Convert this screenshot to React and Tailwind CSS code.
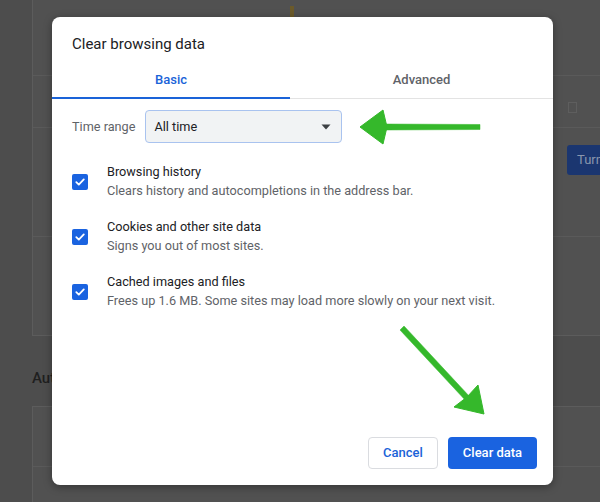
import React from "react";

function Check() {
  return (
    <div className="w-[16px] h-[16px] rounded-[2px] bg-[#1a63e0] flex items-center justify-center shrink-0 mt-[2px]">
      <svg width="12" height="12" viewBox="0 0 12 12">
        <path d="M2.3 6.2 L4.8 8.6 L9.8 3.4" fill="none" stroke="white" strokeWidth="1.8" strokeLinecap="round" strokeLinejoin="round" />
      </svg>
    </div>
  );
}

function Item({ title, desc }) {
  return (
    <div className="flex items-center gap-[19px] h-[40px]">
      <Check />
      <div className="flex flex-col">
        <div className="text-[12.7px] leading-[19px] text-[#202124]">{title}</div>
        <div className="text-[12.7px] leading-[19px] text-[#5f6368]">{desc}</div>
      </div>
    </div>
  );
}

export default function App() {
  return (
    <div
      className="relative w-[600px] h-[502px] overflow-hidden bg-[#4d4d4d]"
      style={{ fontFamily: "Roboto, 'Liberation Sans', Arial, sans-serif" }}
    >
      {/* dimmed settings page */}
      <div className="flex flex-col pl-[32px]">
        <div className="w-[620px] h-[336px] bg-[#515151] border-l border-b border-[#5c5c5c] flex flex-col">
          <div className="h-[76px] border-b border-[#5a5a5a]" />
          <div className="h-[52px] border-b border-[#5a5a5a] flex items-start">
            <div className="ml-[535px] mt-[26px] w-[9px] h-[11px] border border-[#5e5e5e]" />
          </div>
          <div className="h-[109px] border-b border-[#5a5a5a] flex items-start">
            <div className="ml-[534px] mt-[17px] h-[30px] w-[60px] rounded-[3px] bg-[#1b3670] text-[#8a96ad] text-[13px] leading-[30px] pl-[10px]">
              Turn on
            </div>
          </div>
          <div className="flex-1" />
        </div>
        <div className="h-[70px] flex items-center pt-[14px]">
          <span className="text-[15px] text-[#1f1f1f] font-medium">Autofill</span>
        </div>
        <div className="w-[620px] h-[120px] bg-[#515151] border-l border-t border-[#5c5c5c] flex flex-col">
          <div className="h-[60px] border-b border-[#5a5a5a]" />
        </div>
      </div>

      {/* small background glyph at top */}
      <div className="absolute left-[290px] top-[6px] w-[4px] h-[11px] bg-[#6b5a2a]" />

      {/* dialog */}
      <div className="absolute left-[52px] top-[17px] w-[501px] h-[468px] bg-white rounded-[8px] shadow-[0_2px_8px_rgba(0,0,0,0.35)] flex flex-col">
        <div className="pl-[20px] pt-[17px] text-[15px] leading-[20px] text-[#202124]">
          Clear browsing data
        </div>
        <div className="mt-[6px] flex border-b border-[#e3e3e3] h-[39px]">
          <div className="w-[238px] flex items-center justify-center text-[13px] font-medium text-[#1a63d8] border-b-[2px] border-[#1a63d8] -mb-[1px] pt-[2px]">
            Basic
          </div>
          <div className="flex-1 flex items-center justify-center text-[13px] font-medium text-[#5f6368] pt-[1px]">
            Advanced
          </div>
        </div>

        <div className="pl-[20px] pt-[11px] flex items-center gap-[10px]">
          <span className="text-[12.7px] text-[#5f6368]">Time range</span>
          <div className="w-[197px] h-[33px] rounded-[4px] bg-[#f1f3f4] border border-[#a9c3ef] flex items-center justify-between pl-[8px] pr-[10px]">
            <span className="text-[12.7px] text-[#202124]">All time</span>
            <svg width="10" height="6" viewBox="0 0 10 6">
              <path d="M0.5 0.5 L9.5 0.5 L5 5.5 Z" fill="#3c4043" />
            </svg>
          </div>
        </div>

        <div className="pl-[20px] pt-[18px] flex flex-col gap-[15px]">
          <Item title="Browsing history" desc="Clears history and autocompletions in the address bar." />
          <Item title="Cookies and other site data" desc="Signs you out of most sites." />
          <Item title="Cached images and files" desc="Frees up 1.6 MB. Some sites may load more slowly on your next visit." />
        </div>

        <div className="mt-auto flex justify-end gap-[10px] pr-[16px] pb-[16px]">
          <button className="w-[70px] h-[32px] rounded-[4px] border border-[#dadce0] bg-white text-[13px] font-medium text-[#1a63d8]">
            Cancel
          </button>
          <button className="w-[89px] h-[32px] rounded-[4px] bg-[#1a63e0] text-[13px] font-medium text-white">
            Clear data
          </button>
        </div>
      </div>

      {/* green annotation arrows */}
      <svg className="absolute left-0 top-0 pointer-events-none" width="600" height="502" viewBox="0 0 600 502">
        <g fill="#35b82b" stroke="#35b82b" strokeLinejoin="round">
          <path d="M385 124 L480 124.5 L480 129.5 L385 130 Z" strokeWidth="0.5" />
          <path d="M360 127 L383 110 L387 127 L383 144 Z" strokeWidth="1" />
          <path d="M400 330 L404 326 L470 397 L466 401 Z" strokeWidth="0.5" />
          <path d="M484 414 L478 385 L467 397 L454 407 Z" strokeWidth="1" />
        </g>
      </svg>
    </div>
  );
}
